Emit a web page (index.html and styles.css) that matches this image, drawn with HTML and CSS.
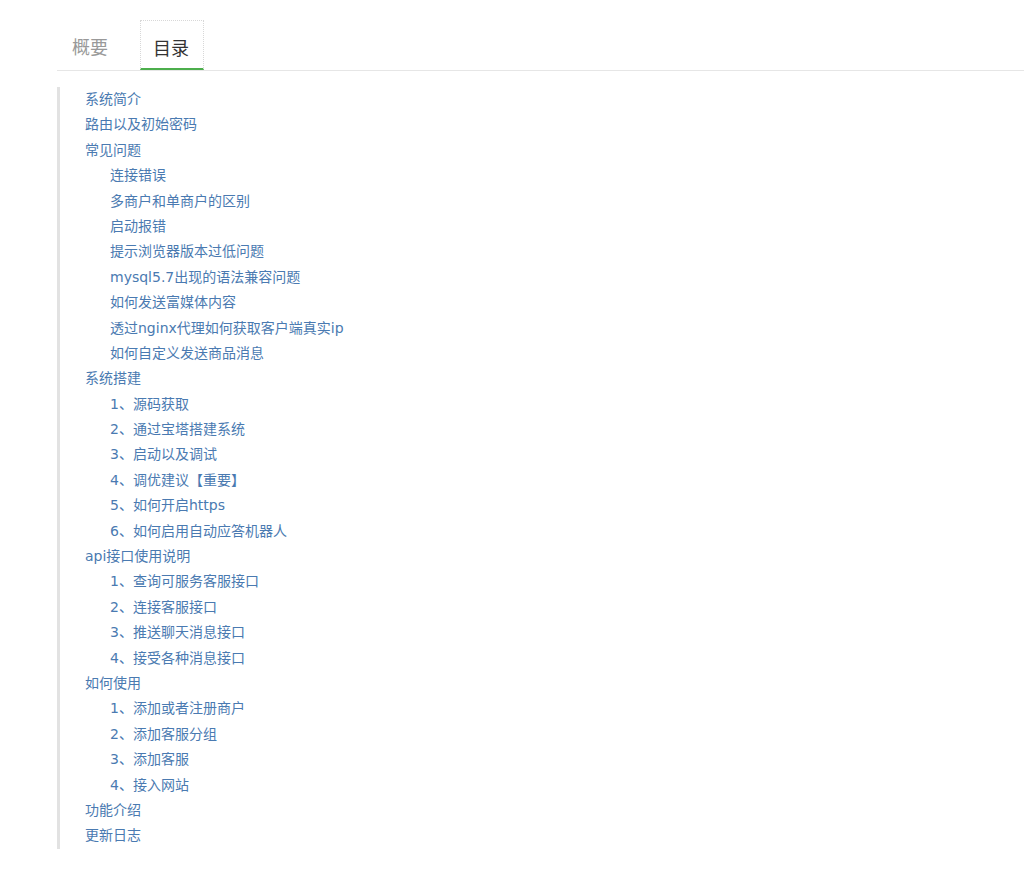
FILE: index.html
```html
<!DOCTYPE html>
<html lang="zh-CN">
<head>
    <meta charset="UTF-8">
    <title>目录</title>
    <link rel="stylesheet" href="styles.css">
</head>
<body>
    <div class="doc">
        <div class="tabs">
            <div class="tab">概要</div>
            <div class="tab active">目录</div>
        </div>

        <ul class="catalog">
            <li><a href="#">系统简介</a></li>
            <li><a href="#">路由以及初始密码</a></li>
            <li><a href="#">常见问题</a></li>
            <li class="sub"><a href="#">连接错误</a></li>
            <li class="sub"><a href="#">多商户和单商户的区别</a></li>
            <li class="sub"><a href="#">启动报错</a></li>
            <li class="sub"><a href="#">提示浏览器版本过低问题</a></li>
            <li class="sub"><a href="#">mysql5.7出现的语法兼容问题</a></li>
            <li class="sub"><a href="#">如何发送富媒体内容</a></li>
            <li class="sub"><a href="#">透过nginx代理如何获取客户端真实ip</a></li>
            <li class="sub"><a href="#">如何自定义发送商品消息</a></li>
            <li><a href="#">系统搭建</a></li>
            <li class="sub"><a href="#">1、源码获取</a></li>
            <li class="sub"><a href="#">2、通过宝塔搭建系统</a></li>
            <li class="sub"><a href="#">3、启动以及调试</a></li>
            <li class="sub"><a href="#">4、调优建议【重要】</a></li>
            <li class="sub"><a href="#">5、如何开启https</a></li>
            <li class="sub"><a href="#">6、如何启用自动应答机器人</a></li>
            <li><a href="#">api接口使用说明</a></li>
            <li class="sub"><a href="#">1、查询可服务客服接口</a></li>
            <li class="sub"><a href="#">2、连接客服接口</a></li>
            <li class="sub"><a href="#">3、推送聊天消息接口</a></li>
            <li class="sub"><a href="#">4、接受各种消息接口</a></li>
            <li><a href="#">如何使用</a></li>
            <li class="sub"><a href="#">1、添加或者注册商户</a></li>
            <li class="sub"><a href="#">2、添加客服分组</a></li>
            <li class="sub"><a href="#">3、添加客服</a></li>
            <li class="sub"><a href="#">4、接入网站</a></li>
            <li><a href="#">功能介绍</a></li>
            <li><a href="#">更新日志</a></li>
        </ul>
    </div>
</body>
</html>
```

FILE: styles.css
```css
body {
    margin: 0;
    background: #fff;
    font-family: "DejaVu Sans", "Noto Sans CJK SC", sans-serif;
}
.doc {
    padding: 20px 0 0 57px;
}
.tabs {
    display: flex;
    align-items: flex-end;
    border-bottom: 1px solid #e6e6e6;
}
.tab {
    height: 48px;
    line-height: 52px;
    padding: 0 15px;
    font-size: 18px;
    color: #999;
    font-family: "Noto Sans CJK SC", sans-serif;
    border-bottom: 2px solid transparent;
}
.tab.active {
    height: 47px;
    color: #333;
    margin-left: 17px;
    padding: 0 14px 0 12px;
    border: 1px dotted #d8d8d8;
    border-bottom: 2px solid #4cae4c;
}
.catalog {
    list-style: none;
    margin: 16px 0 0 0;
    padding: 0 0 0 25px;
    border-left: 3px solid #e2e2e2;
    font-size: 14px;
    line-height: 25.4px;
}
.catalog li {
    height: 25.4px;
}
.catalog .sub {
    padding-left: 25px;
}
.catalog a {
    color: #4a7ab1;
    text-decoration: none;
}
```
